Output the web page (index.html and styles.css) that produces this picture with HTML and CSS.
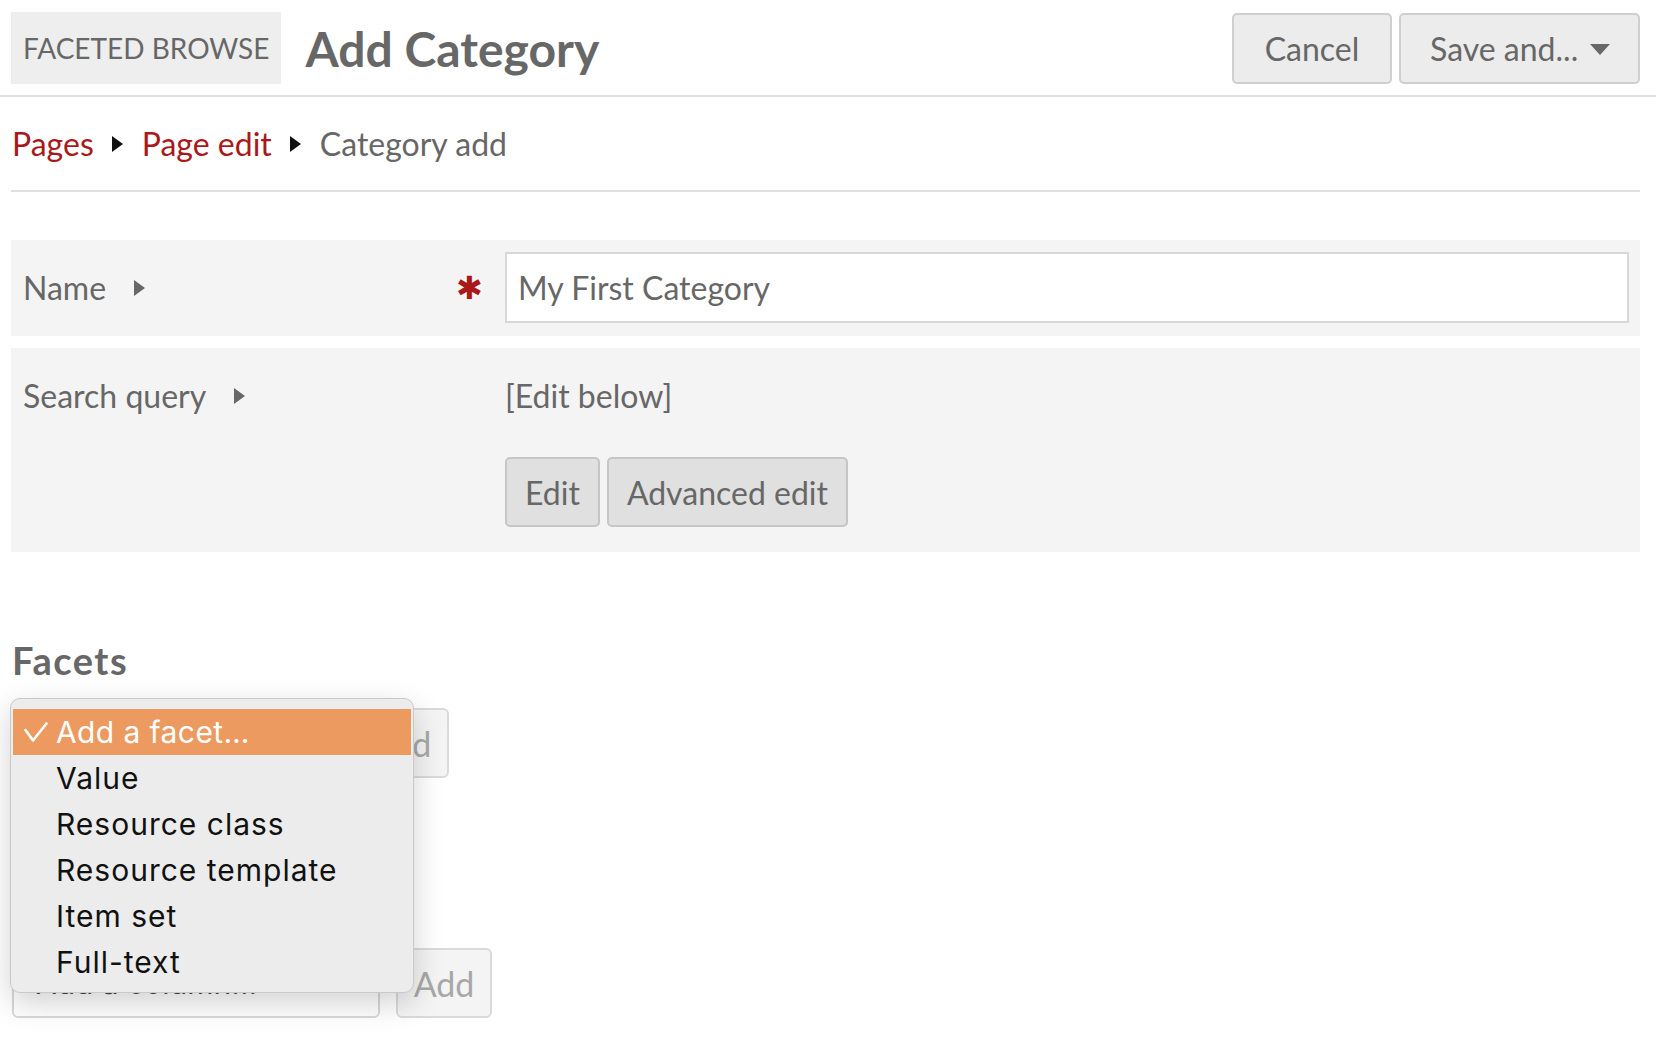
FILE: index.html
```html
<!DOCTYPE html>
<html lang="en">
<head>
<meta charset="utf-8">
<title>Add Category</title>
<link rel="stylesheet" href="styles.css">
</head>
<body>
<header class="page-header">
  <div class="module-name">Faceted Browse</div>
  <h1 class="page-title">Add Category</h1>
  <div class="page-actions">
    <button class="btn btn-lg btn-cancel">Cancel</button>
    <button class="btn btn-lg btn-save">Save and... <span class="caret"></span></button>
  </div>
</header>

<nav class="breadcrumbs">
  <a href="#">Pages</a>
  <span class="crumb-sep"></span>
  <a href="#">Page edit</a>
  <span class="crumb-sep"></span>
  <span class="current">Category add</span>
</nav>

<main class="content">
  <div class="field">
    <div class="field-meta">
      <span class="label">Name</span>
      <span class="expand"></span>
      <span class="required">&#10033;</span>
    </div>
    <div class="inputs">
      <input class="text-input" type="text" value="My First Category">
    </div>
  </div>

  <div class="field field-tall">
    <div class="field-meta">
      <span class="label">Search query</span>
      <span class="expand"></span>
    </div>
    <div class="inputs">
      <div class="edit-below">[Edit below]</div>
      <div class="query-buttons">
        <button class="btn btn-dark">Edit</button>
        <button class="btn btn-dark">Advanced edit</button>
      </div>
    </div>
  </div>

  <h3 class="section-title">Facets</h3>
  <div class="add-row">
    <div class="select select-facet">Add a facet... <span class="select-arrow">&#9662;</span></div>
    <button class="btn btn-disabled">Add</button>
  </div>

  <h3 class="section-title section-columns">Columns</h3>
  <div class="add-row">
    <div class="select select-column">Add a column... <span class="select-arrow">&#9662;</span></div>
    <button class="btn btn-disabled">Add</button>
  </div>

  <ul class="popup">
    <li class="option selected"><svg class="check" width="24" height="20" viewBox="0 0 24 20"><polyline points="1.5,8 9,18.5 22.5,1.5" fill="none" stroke="#ffffff" stroke-width="2.6" stroke-linecap="round" stroke-linejoin="round"/></svg>Add a facet…</li>
    <li class="option">Value</li>
    <li class="option">Resource class</li>
    <li class="option">Resource template</li>
    <li class="option">Item set</li>
    <li class="option">Full-text</li>
  </ul>
</main>
</body>
</html>
```

FILE: styles.css
```css
* { box-sizing: border-box; }

html, body {
  margin: 0;
  padding: 0;
  background: #ffffff;
}

body {
  font-family: Lato, "Liberation Sans", sans-serif;
  font-size: 32px;
  color: #676767;
  width: 1656px;
  height: 1044px;
  overflow: hidden;
  position: relative;
}

/* ---------- header ---------- */
.page-header {
  display: flex;
  align-items: center;
  padding: 12px 16px 11px 11px;
  border-bottom: 2px solid #e0e0e0;
}

.module-name {
  background: #eeeeee;
  height: 72px;
  padding: 0 12px;
  display: flex;
  align-items: center;
  font-size: 28px;
  text-transform: uppercase;
  color: #676767;
  white-space: nowrap;
}

.page-title {
  margin: 0 0 0 24px;
  font-size: 48px;
  font-weight: 700;
  color: #676767;
  flex: 1;
  white-space: nowrap;
}

.page-actions {
  display: flex;
  gap: 7px;
}

.btn {
  font-family: Lato, "Liberation Sans", sans-serif;
  color: #676767;
  background: #ececec;
  border: 2px solid #cfcfcf;
  border-radius: 5px;
  padding: 0 18px;
  height: 70px;
  font-size: 32px;
  display: inline-flex;
  align-items: center;
  justify-content: center;
  white-space: nowrap;
}

.btn-lg {
  height: 71px;
  padding: 0;
}

.btn-cancel { width: 160px; }

.btn-save {
  width: 241px;
  justify-content: flex-start;
  padding-left: 29px;
  gap: 12px;
}

.caret {
  display: inline-block;
  width: 0;
  height: 0;
  border-left: 10px solid transparent;
  border-right: 10px solid transparent;
  border-top: 11px solid #676767;
  margin-top: 2px;
}

/* ---------- breadcrumbs ---------- */
.breadcrumbs {
  margin: 0 16px 0 11px;
  padding: 27px 0 26px 1px;
  line-height: 40px;
  border-bottom: 2px solid #e0e0e0;
  display: flex;
  align-items: center;
  white-space: nowrap;
}

.breadcrumbs a {
  color: #a91919;
  text-decoration: none;
}

.crumb-sep {
  display: inline-block;
  width: 0;
  height: 0;
  border-top: 8.5px solid transparent;
  border-bottom: 8.5px solid transparent;
  border-left: 11px solid #111111;
  margin: 0 19px 0 18px;
}

.current { color: #676767; }

/* ---------- form ---------- */
.content {
  padding: 48px 16px 0 11px;
}

.field {
  background: #f4f4f4;
  display: grid;
  grid-template-columns: 482px 1fr;
  padding: 12px 11px 13px 12px;
  margin-bottom: 12px;
}

.field-meta {
  display: flex;
  align-items: center;
  height: 71px;
  position: relative;
  white-space: nowrap;
}

.label { color: #676767; }

.expand {
  display: inline-block;
  width: 0;
  height: 0;
  border-top: 8.5px solid transparent;
  border-bottom: 8.5px solid transparent;
  border-left: 11px solid #676767;
  margin-left: 28px;
}

.required {
  position: absolute;
  left: 433px;
  top: 20px;
  color: #a91919;
  font-size: 32px;
  line-height: 32px;
  font-family: "DejaVu Sans", sans-serif;
  font-weight: 700;
}

.text-input {
  width: 100%;
  height: 71px;
  border: 2px solid #d8d8d8;
  background: #ffffff;
  font-family: Lato, "Liberation Sans", sans-serif;
  font-size: 32px;
  color: #676767;
  padding: 0 11px;
  outline: none;
}

.field-tall { padding-bottom: 25px; }

.edit-below {
  height: 71px;
  display: flex;
  align-items: center;
}

.query-buttons {
  display: flex;
  gap: 7px;
  margin-top: 26px;
}

.btn-dark {
  background: #e0e0e0;
  border-color: #c6c6c6;
}

/* ---------- facets / columns ---------- */
.section-title {
  margin: 86px 0 0 1px;
  font-size: 38px;
  line-height: 44px;
  font-weight: 700;
  letter-spacing: 1.5px;
  color: #676767;
}

.section-columns { margin-top: 100px; }

.add-row {
  display: flex;
  gap: 16px;
  margin-top: 26px;
  margin-left: 1px;
}

.select {
  height: 70px;
  border: 2px solid #d8d8d8;
  border-radius: 6px;
  background: #ffffff;
  font-family: Inter, "Noto Sans", sans-serif;
  font-size: 30px;
  color: #444444;
  display: flex;
  align-items: center;
  justify-content: space-between;
  padding: 0 20px 0 22px;
  white-space: nowrap;
}

.select-facet { width: 325px; }
.select-column { width: 368px; }

.select-arrow {
  font-size: 22px;
  color: #555555;
}

.btn-disabled {
  width: 96px;
  height: 70px;
  background: #f4f4f4;
  border: 2px solid #dadada;
  border-radius: 6px;
  color: #a8a8a8;
  font-size: 34px;
  padding: 0;
}

/* ---------- native select popup ---------- */
.popup {
  position: absolute;
  left: 10px;
  top: 698px;
  width: 404px;
  height: 295px;
  margin: 0;
  padding: 10px 2px 0 2px;
  list-style: none;
  background: #ececec;
  border: 1px solid #c9c9c9;
  border-radius: 10px;
  box-shadow: 0 10px 30px rgba(0, 0, 0, 0.18);
  font-family: Inter, "Noto Sans", sans-serif;
  font-size: 30px;
  color: #111111;
}

.option {
  height: 46px;
  line-height: 46px;
  padding-left: 43px;
  position: relative;
  letter-spacing: 1px;
  white-space: nowrap;
}

.option.selected {
  background: #ec9a60;
  color: #ffffff;
  letter-spacing: 0.4px;
}

.check {
  position: absolute;
  left: 11px;
  top: 13px;
}
```
